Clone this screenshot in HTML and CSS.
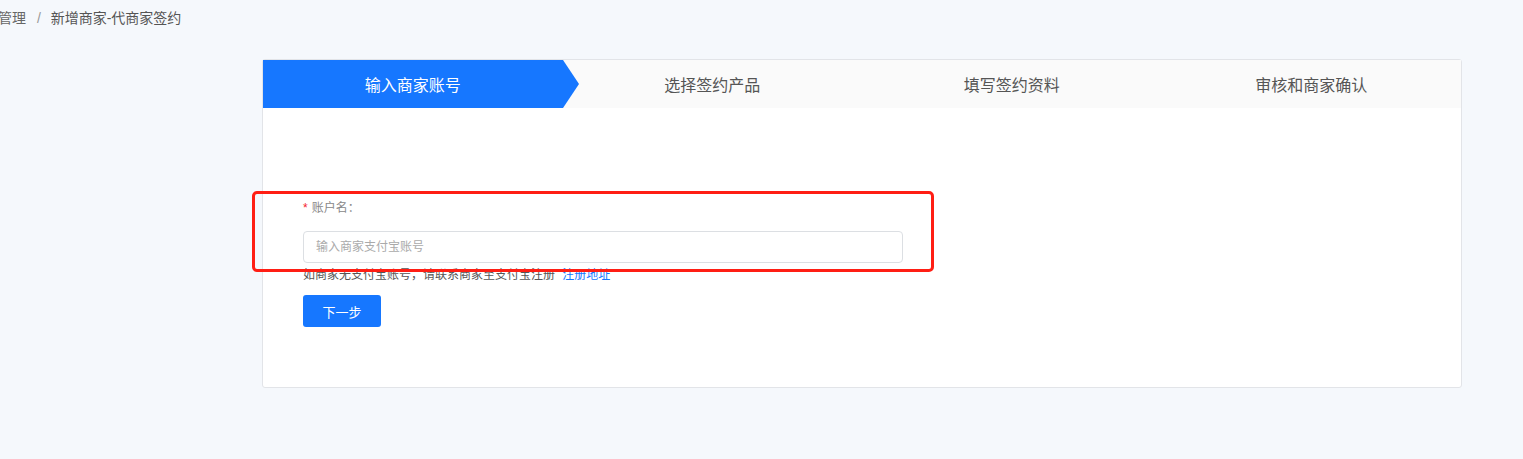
FILE: index.html
```html
<!DOCTYPE html>
<html lang="zh-CN">
<head>
    <meta charset="UTF-8">
    <meta name="viewport" content="width=device-width, initial-scale=1.0">
    <title>新增商家-代商家签约</title>
    <link rel="stylesheet" href="styles.css">
</head>
<body>
    <div class="breadcrumb">
        <span class="crumb">管理</span>
        <span class="sep">/</span>
        <span class="crumb current">新增商家-代商家签约</span>
    </div>

    <div class="main">
        <div class="card">
            <div class="steps">
                <div class="step active">输入商家账号</div>
                <div class="step">选择签约产品</div>
                <div class="step">填写签约资料</div>
                <div class="step">审核和商家确认</div>
            </div>

            <div class="form">
                <div class="form-item">
                    <label for="account"><span class="required">*</span>账户名：</label>
                    <input id="account" type="text" placeholder="输入商家支付宝账号">
                    <div class="help">如商家无支付宝账号，请联系商家至支付宝注册 <a href="#">注册地址</a></div>
                </div>
                <button class="next-btn">下一步</button>
            </div>

            <div class="highlight"></div>
        </div>
    </div>
</body>
</html>
```

FILE: styles.css
```css
body {
    margin: 0;
    background: #f5f8fc;
    font-family: "Liberation Sans", "Noto Sans CJK SC", sans-serif;
    color: #333;
}

.breadcrumb {
    height: 36px;
    line-height: 36px;
    margin-left: -2px;
    font-size: 14px;
    color: #666;
}

.breadcrumb .sep {
    margin: 0 6px 0 7px;
    color: #999;
}

.breadcrumb .current {
    color: #555;
}

.main {
    padding: 23px 0 0 262px;
}

.card {
    position: relative;
    width: 1198px;
    background: #fff;
    border: 1px solid #e2e4e8;
    border-radius: 3px;
}

.steps {
    display: flex;
    height: 48px;
    background: #fafafa;
}

.step {
    position: relative;
    flex: 1;
    display: flex;
    align-items: center;
    justify-content: center;
    font-size: 16px;
    color: #555;
}

.step.active {
    background: #1677ff;
    color: #fff;
}

.step.active::after {
    content: "";
    position: absolute;
    top: 0;
    right: -16px;
    border-top: 24px solid transparent;
    border-bottom: 24px solid transparent;
    border-left: 16px solid #1677ff;
    z-index: 1;
}

.form {
    padding: 90px 0 60px 40px;
}

.form-item label {
    display: block;
    line-height: 20px;
    font-size: 12px;
    color: #888;
}

.required {
    color: #f5222d;
    margin-right: 4px;
}

.form-item input {
    display: block;
    width: 600px;
    height: 32px;
    margin-top: 13px;
    padding: 0 12px;
    box-sizing: border-box;
    border: 1px solid #dcdfe3;
    border-radius: 4px;
    font-family: inherit;
    font-size: 12px;
    color: #333;
    outline: none;
}

.form-item input::placeholder {
    color: #aaa;
}

.help {
    margin-top: 2px;
    line-height: 20px;
    font-size: 12px;
    color: #555;
}

.help a {
    color: #1677ff;
    text-decoration: none;
    margin-left: 4px;
}

.next-btn {
    display: block;
    margin-top: 10px;
    width: 78px;
    height: 32px;
    border: none;
    border-radius: 3px;
    background: #1677ff;
    color: #fff;
    font-family: inherit;
    font-size: 13px;
    cursor: pointer;
}

/* 标注框 */
.highlight {
    position: absolute;
    left: -11px;
    top: 131px;
    width: 682px;
    height: 81px;
    box-sizing: border-box;
    border: 3px solid #ff1e14;
    border-radius: 5px;
    pointer-events: none;
}
```
